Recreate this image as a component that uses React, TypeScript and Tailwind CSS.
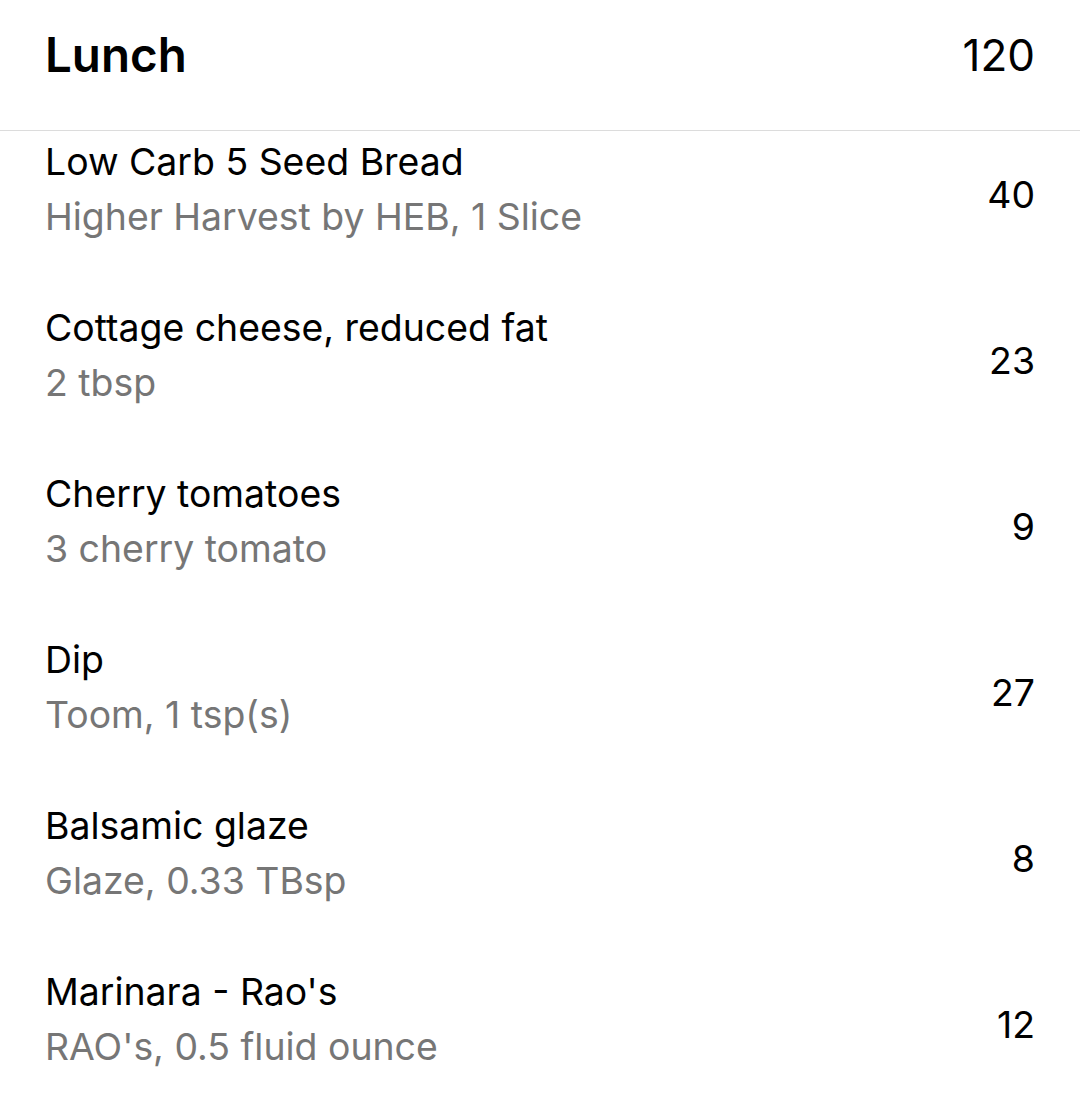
import React from "react";

type Food = { name: string; detail: string; kcal: number };

const foods: Food[] = [
  { name: "Low Carb 5 Seed Bread", detail: "Higher Harvest by HEB, 1 Slice", kcal: 40 },
  { name: "Cottage cheese, reduced fat", detail: "2 tbsp", kcal: 23 },
  { name: "Cherry tomatoes", detail: "3 cherry tomato", kcal: 9 },
  { name: "Dip", detail: "Toom, 1 tsp(s)", kcal: 27 },
  { name: "Balsamic glaze", detail: "Glaze, 0.33 TBsp", kcal: 8 },
  { name: "Marinara - Rao's", detail: "RAO's, 0.5 fluid ounce", kcal: 12 },
];

const FoodRow: React.FC<{ food: Food }> = ({ food }) => (
  <div className="flex h-[166px] items-start pl-[45px] pr-[45px] pt-[3px]">
    <div className="flex flex-1 items-center">
      <div className="flex flex-1 flex-col">
        <span className="text-[37.4px] leading-[55px] text-black">{food.name}</span>
        <span className="text-[37.4px] leading-[55px] text-[#767676]">{food.detail}</span>
      </div>
      <span className="pt-[10px] text-[37.4px] leading-[55px] text-black">{food.kcal}</span>
    </div>
  </div>
);

export default function App() {
  return (
    <div className="min-h-[1119px] w-[1080px] bg-white font-['Inter',sans-serif]">
      <div className="flex h-[130px] items-center justify-between pb-[20px] pl-[45px] pr-[45px]">
        <span className="text-[47.5px] font-semibold text-black">Lunch</span>
        <span className="text-[44px] text-black">120</span>
      </div>
      <div className="h-[1px] bg-[#dcdcdc]" />
      {foods.map((f) => (
        <FoodRow key={f.name} food={f} />
      ))}
    </div>
  );
}
